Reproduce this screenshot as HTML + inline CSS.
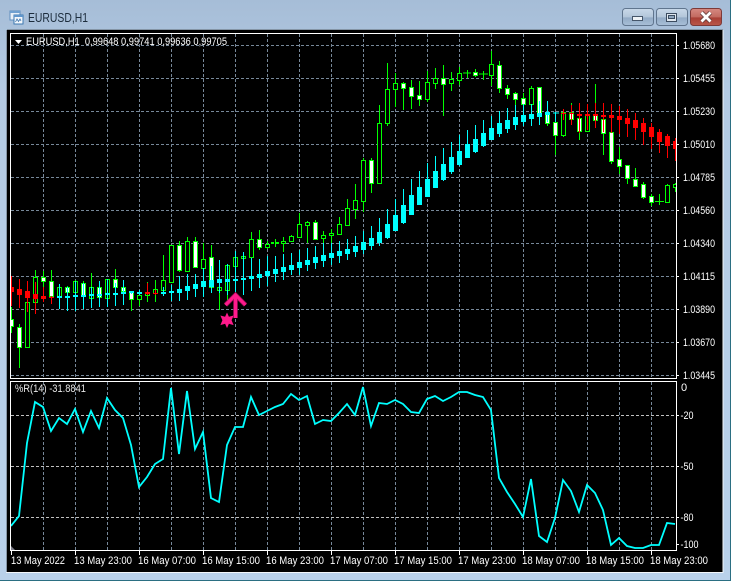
<!DOCTYPE html>
<html><head><meta charset="utf-8"><title>EURUSD,H1</title>
<style>
html,body{margin:0;padding:0;background:#fff;width:734px;height:582px;overflow:hidden}
svg{display:block}
text{font-family:"Liberation Sans",sans-serif;font-size:11px;fill:#fff}
</style></head><body>
<svg width="734" height="582" viewBox="0 0 734 582" xmlns="http://www.w3.org/2000/svg">
<defs>
<linearGradient id="bg" x1="0" y1="0" x2="0" y2="1"><stop offset="0" stop-color="#a6bdd7"/><stop offset=".16" stop-color="#b4cbe4"/><stop offset="1" stop-color="#b9d1ea"/></linearGradient>
<linearGradient id="btn" x1="0" y1="0" x2="0" y2="1"><stop offset="0" stop-color="#c9d8e9"/><stop offset=".5" stop-color="#b3c6da"/><stop offset=".55" stop-color="#93abc6"/><stop offset="1" stop-color="#a9c0d8"/></linearGradient>
<linearGradient id="cls" x1="0" y1="0" x2="0" y2="1"><stop offset="0" stop-color="#d68a82"/><stop offset=".5" stop-color="#c26a60"/><stop offset=".55" stop-color="#a93f35"/><stop offset="1" stop-color="#b9574a"/></linearGradient>
<clipPath id="m"><rect x="11" y="34" width="665" height="344"/></clipPath>
<clipPath id="i"><rect x="11" y="382" width="665" height="168"/></clipPath>
</defs>
<rect x="0" y="0" width="731" height="581" fill="url(#bg)"/>
<path d="M730.5 0V581M0 580.5H731" stroke="#2b6f82" fill="none"/>
<rect x="7" y="30" width="716" height="542" fill="#000"/>
<path d="M7 29.5H723M6.5 30V573" stroke="#8595a6" fill="none"/>
<path d="M6 572.5H723.5M723 30V573" stroke="#f2f6fa" fill="none"/>

<!-- title bar -->
<g shape-rendering="crispEdges">
<rect x="10" y="11" width="10" height="9" fill="#e8f0f8" stroke="#5f8fc0"/>
<rect x="10" y="11" width="10" height="2" fill="#6fa0d0"/>
<rect x="14" y="15" width="9" height="9" fill="#f4f8fc" stroke="#3d78b0"/>
<rect x="14" y="15" width="9" height="2" fill="#5f96cc"/>
</g>
<path d="M15.5 22l1.5-3 1.500 2.500 1.500-2.500 1 2" stroke="#3b74ad" fill="none" stroke-width=".8"/>
<text x="28" y="22" style="font-size:12.500px;fill:#1c2c3c" textLength="60" lengthAdjust="spacingAndGlyphs">EURUSD,H1</text>

<rect x="622.5" y="8.5" width="31" height="17" rx="3" fill="url(#btn)" stroke="#60758e"/>
<rect x="632.5" y="16.5" width="10" height="4" fill="#eef2f6" stroke="#46566a"/>
<rect x="656.5" y="8.5" width="31" height="17" rx="3" fill="url(#btn)" stroke="#60758e"/>
<rect x="666.5" y="13.5" width="10" height="8" fill="#dfe7ef" stroke="#3c4c60"/>
<rect x="668.5" y="15.5" width="6" height="3" fill="#8fa6be" stroke="#3c4c60"/>
<rect x="690.5" y="8.5" width="31" height="17" rx="3" fill="url(#cls)" stroke="#7d3a38"/>
<path d="M701.5 12.5l9 9M710.5 12.5l-9 9" stroke="#5d3a38" stroke-width="4.4"/>
<path d="M701.5 12.5l9 9M710.5 12.5l-9 9" stroke="#fff" stroke-width="2.8"/>

<!-- grids -->
<g fill="none" stroke="#778899" stroke-dasharray="3 2" shape-rendering="crispEdges">
<path d="M11 45.5H676M11 78.5H676M11 111.5H676M11 144.5H676M11 177.5H676M11 210.5H676M11 243.5H676M11 276.5H676M11 309.5H676M11 342.5H676M11 375.5H676"/>
<path d="M43.5 34V378M75.5 34V378M107.5 34V378M139.5 34V378M171.5 34V378M203.5 34V378M235.5 34V378M267.5 34V378M299.5 34V378M331.5 34V378M363.5 34V378M395.5 34V378M427.5 34V378M459.5 34V378M491.5 34V378M523.5 34V378M555.5 34V378M587.5 34V378M619.5 34V378M651.5 34V378"/>
<path d="M43.5 382V550M75.5 382V550M107.5 382V550M139.5 382V550M171.5 382V550M203.5 382V550M235.5 382V550M267.5 382V550M299.5 382V550M331.5 382V550M363.5 382V550M395.5 382V550M427.5 382V550M459.5 382V550M491.5 382V550M523.5 382V550M555.5 382V550M587.5 382V550M619.5 382V550M651.5 382V550"/>
</g>
<path d="M11 415.5H676M11 466.5H676M11 517.5H676" stroke="#c0c0c0" stroke-dasharray="3 2" fill="none" shape-rendering="crispEdges"/>

<!-- frames -->
<g stroke="#fff" fill="none" shape-rendering="crispEdges">
<path d="M10.5 33V379M10 33.5H677M676.5 33V379M10 378.5H677"/>
<path d="M10.5 381V551M10 381.5H677M676.5 381V551M10 550.5H677"/>
<path d="M677 45.5h2M677 78.5h2M677 111.5h2M677 144.5h2M677 177.5h2M677 210.5h2M677 243.5h2M677 276.5h2M677 309.5h2M677 342.5h2M677 375.5h2M677 415.5h2M677 466.5h2M677 517.5h2M677 544.5h2"/>
<path d="M11.5 551v4M75.5 551v4M139.5 551v4M203.5 551v4M267.5 551v4M331.5 551v4M395.5 551v4M459.5 551v4M523.5 551v4M587.5 551v4M651.5 551v4"/>
</g>

<!-- candles -->
<g clip-path="url(#m)" fill="none" shape-rendering="crispEdges">
<path stroke="#0f0" d="M11.5 307V333M19.5 324V368M27.5 302V347M35.5 270V303M43.5 271V287M51.5 270V298M59.5 284V298M67.5 286V293M75.5 280V292M83.5 281V297M91.5 273V298M99.5 281V298M107.5 279V298M115.5 269V287M123.5 286V292M131.5 291V311M139.5 292V306M147.5 282V302M155.5 280V302M163.5 255V292M171.5 245V282M179.5 241V272M187.5 237V272M195.5 237V268M203.5 243V268M211.5 245V288M219.5 260V310M227.5 264V300M235.5 251V285M243.5 252V268M251.5 232V258M259.5 230V250M267.5 241V249M275.5 239V247M283.5 237V252M291.5 235V242M299.5 213V238M307.5 221V243M315.5 220V240M323.5 231V243M331.5 229V243M339.5 217V235M347.5 199V226M355.5 184V219M363.5 158V212M371.5 158V193M379.5 105V183M387.5 63V126M395.5 73V107M403.5 82V110M411.5 80V109M419.5 81V106M427.5 71V102M435.5 68V89M443.5 65V116M451.5 72V91M459.5 67V85M467.5 70V78M475.5 69V77M483.5 71V80M491.5 51V86M499.5 61V93M507.5 85V99M515.5 92V112M523.5 93V115M531.5 86V113M539.5 87V118M547.5 110V126M555.5 113V155M563.5 109V137M571.5 103V125M579.5 103V140M587.5 115V131M595.5 84V128M603.5 119V155M611.5 132V164M619.5 147V174M627.5 165V184M635.5 168V187M643.5 182V199M651.5 194V206M659.5 194V205M667.5 184V202M675.5 183V192"/>
<path stroke="#0f0" d="M463 73h8M479 74h9M555 113h1M655 201.500h9" />
<path stroke="#0f0" fill="#fff" d="M9.500 319.500h4V326.500h-4zM17.500 327.500h4V347.500h-4zM41.500 277.500h4V281.500h-4zM49.500 281.500h4V296.500h-4zM65.500 287.500h4V292.500h-4zM81.500 283.500h4V296.500h-4zM97.500 287.500h4V297.500h-4zM113.500 279.500h4V287.500h-4zM121.500 287.500h4V291.500h-4zM129.500 292.500h4V299.500h-4zM177.500 245.500h4V270.500h-4zM193.500 241.500h4V267.500h-4zM209.500 257.500h4V287.500h-4zM257.500 239.500h4V247.500h-4zM313.500 222.500h4V239.500h-4zM369.500 160.500h4V183.500h-4zM401.500 83.500h4V88.500h-4zM409.500 87.500h4V96.500h-4zM417.500 95.500h4V99.500h-4zM441.500 78.500h4V84.500h-4zM473.500 72.500h4V75.500h-4zM497.500 65.500h4V88.500h-4zM505.500 88.500h4V94.500h-4zM513.500 93.500h4V99.500h-4zM521.500 98.500h4V104.500h-4zM537.500 87.500h4V115.500h-4zM545.500 112.500h4V123.500h-4zM553.500 122.500h4V135.500h-4zM569.500 112.500h4V119.500h-4zM577.500 118.500h4V131.500h-4zM593.500 114.500h4V120.500h-4zM601.500 119.500h4V133.500h-4zM609.500 132.500h4V161.500h-4zM617.500 159.500h4V166.500h-4zM625.500 165.500h4V178.500h-4zM633.500 179.500h4V186.500h-4zM641.500 184.500h4V197.500h-4zM649.500 196.500h4V202.500h-4z"/>
<path stroke="#0f0" fill="#000" d="M25.500 302.500h4V347.500h-4zM33.500 277.500h4V302.500h-4zM57.500 287.500h4V297.500h-4zM73.500 281.500h4V292.500h-4zM89.500 287.500h4V298.500h-4zM105.500 279.500h4V298.500h-4zM137.500 295.500h4V299.500h-4zM145.500 293.500h4V295.500h-4zM153.500 289.500h4V293.500h-4zM161.500 280.500h4V290.500h-4zM169.500 245.500h4V282.500h-4zM185.500 241.500h4V271.500h-4zM201.500 259.500h4V268.500h-4zM217.500 287.500h4V290.500h-4zM225.500 265.500h4V290.500h-4zM233.500 257.500h4V266.500h-4zM241.500 256.500h4V258.500h-4zM249.500 239.500h4V257.500h-4zM265.500 244.500h4V247.500h-4zM281.500 241.500h4V243.500h-4zM289.500 236.500h4V241.500h-4zM297.500 224.500h4V237.500h-4zM305.500 222.500h4V225.500h-4zM321.500 235.500h4V238.500h-4zM329.500 233.500h4V235.500h-4zM337.500 224.500h4V234.500h-4zM345.500 208.500h4V225.500h-4zM353.500 200.500h4V209.500h-4zM361.500 160.500h4V201.500h-4zM377.500 123.500h4V183.500h-4zM385.500 89.500h4V123.500h-4zM393.500 83.500h4V89.500h-4zM425.500 82.500h4V99.500h-4zM433.500 78.500h4V83.500h-4zM449.500 79.500h4V83.500h-4zM457.500 73.500h4V80.500h-4zM489.500 64.500h4V75.500h-4zM529.500 88.500h4V104.500h-4zM561.500 112.500h4V135.500h-4zM585.500 115.500h4V131.500h-4zM665.500 185.500h4V202.500h-4zM673.500 184.500h4V187.500h-4z"/>
<path stroke="#0f0" stroke-width="2" d="M274 243h-3M279 243h-3"/>

<!-- cyan series -->
<path stroke="#0ff" d="M59.500 284V309M67.500 287V311M75.500 281V311M83.500 283V309M91.500 287V308M99.500 281V307M107.500 279V307M115.500 283V306M123.500 280V305M131.500 291V294M139.500 290V295M163.500 287V296M171.500 285V301M179.500 276V301M187.500 274V300M195.500 274V297M203.500 268V297M211.500 266V293M219.500 260V293M227.500 264V295M235.500 251V295M243.500 252V295M251.500 258V291M259.500 259V288M267.500 256V286M275.500 256V282M283.500 254V280M291.500 253V275M299.500 250V275M307.500 248V271M315.500 246V269M323.500 243V267M331.500 243V265M339.500 241V263M347.500 239V260M355.500 236V257M363.500 231V254M371.500 226V250M379.500 218V246M387.500 209V239M395.500 199V231M403.500 189V224M411.500 179V215M419.500 171V205M427.500 163V197M435.500 156V188M443.500 148V181M451.500 142V174M459.500 135V166M467.500 130V158M475.500 125V153M483.500 120V147M491.500 116V140M499.500 111V137M507.500 108V133M515.500 105V130M523.500 104V126M531.500 104V126M539.500 101V125M547.500 101V122M555.500 112V122"/>
<path stroke="#0ff" stroke-width="5" d="M59.500 296V298M67.500 296V298M75.500 295V297M83.500 295V297M91.500 294V296M99.500 294V296M107.500 293V295M115.500 293V295M123.500 292V294M131.500 291V293M139.500 292V294M163.500 292V294M171.500 291V293M179.500 289V293M187.500 286V291M195.500 284V289M203.500 281V287M211.500 280V287M219.500 279V283M227.500 279V282M235.500 279V281M243.500 278V280M251.500 276V279M259.500 274V278M267.500 271V276M275.500 269V274M283.500 267V272M291.500 265V270M299.500 262V268M307.500 260V265M315.500 257V263M323.500 255V261M331.500 253V258M339.500 251V256M347.500 249V254M355.500 246V252M363.500 242V250M371.500 238V246M379.500 232V243M387.500 224V238M395.500 215V231M403.500 205V223M411.500 195V215M419.500 187V205M427.500 179V197M435.500 171V188M443.500 164V180M451.500 157V172M459.500 151V165M467.500 144V158M475.500 139V152M483.500 133V146M491.500 128V140M499.500 123V134M507.500 120V129M515.500 117V125M523.500 115V122M531.500 114V119M539.500 113V117M547.500 112V115"/>
<path stroke="#0ff" d="M553 113h6"/>

<!-- red series -->
<path stroke="#f00" d="M11.500 276V306M19.500 279V308M27.500 281V312M35.500 282V314M43.500 287V302M51.500 296V304M147.500 283V295M155.500 290V295M563.500 109V120M571.500 105V125M579.500 103V133M587.500 104V130M595.500 103V128M603.500 103V132M611.500 104V133M619.500 106V134M627.500 109V137M635.500 113V140M643.500 118V145M651.500 123V149M659.500 129V153M667.500 134V158M675.500 138V161"/>
<path stroke="#f00" stroke-width="5" d="M11.500 287V292M19.500 289V295M27.500 291V298M35.500 294V299M43.500 296V299M51.500 297V298M147.500 292V294M155.500 293V294M563.500 113V114M571.500 113V114M579.500 114V116M587.500 114V116M595.500 114V116M603.500 115V117M611.500 115V118M619.500 116V120M627.500 118V124M635.500 120V128M643.500 123V132M651.500 127V137M659.500 132V142M667.500 136V146M675.500 141V149"/>
</g>

<!-- arrow and star -->
<path d="M235.500 318V296M225.500 305l10-10 10 10" fill="none" stroke="#a80d5c" stroke-width="4.600"/>
<path d="M235.500 318V296M225.500 305l10-10 10 10" fill="none" stroke="#ff1a8c" stroke-width="3"/>
<path d="M227 312.500l1.900 4.300 4.700-1.300-2 4.800 2 4.800-4.700-1.300-1.900 4.300-1.900-4.300-4.700 1.300 2-4.800-2-4.800 4.700 1.300z" fill="#ff1a8c"/>

<!-- %R line -->
<g clip-path="url(#i)">
<path fill="#7f7f8a" d="M11 546l5 5h-5z"/>
<polyline fill="none" stroke="#0ff" stroke-width="1.800" points="11,526 19,516 27,443 35,402 43,407 51,431 59,418 67,424 75,409 83,432 91,411 99,428 107,398 115,410 123,418 131,445 139,487 147,477 155,464 163,459 171,388 179,454 187,391 195,449 203,432 211,498 219,502 227,445 235,427 243,427 251,397 259,415 267,411 275,407 283,404 291,394 299,400 307,396 315,424 323,420 331,421 339,413 347,404 355,415 363,387 371,426 379,403 387,404 395,400 403,404 411,412 419,413 427,399 435,396 443,401 451,397 459,392 467,392 475,395 483,397 491,410 499,478 507,492 515,504 523,517 531,479 539,536 547,542 555,518 563,480 571,491 579,512 587,485 595,493 603,510 611,545 619,538 627,546 635,548 643,548 651,545 659,545 667,523 675,524"/>
</g>

<!-- labels -->
<path d="M15 40h7l-3.500 4z" fill="#fff"/>
<text x="26" y="45" textLength="201" lengthAdjust="spacingAndGlyphs" xml:space="preserve">EURUSD,H1  0,99648 0,99741 0,99636 0,99705</text>
<text x="15" y="392" textLength="71" lengthAdjust="spacingAndGlyphs" style="fill:#e8e8e8">%R(14) -31.8841</text>

<text x="683" y="49" textLength="32" lengthAdjust="spacingAndGlyphs">1.05680</text>
<text x="683" y="82" textLength="32" lengthAdjust="spacingAndGlyphs">1.05455</text>
<text x="683" y="115" textLength="32" lengthAdjust="spacingAndGlyphs">1.05230</text>
<text x="683" y="148" textLength="32" lengthAdjust="spacingAndGlyphs">1.05010</text>
<text x="683" y="181" textLength="32" lengthAdjust="spacingAndGlyphs">1.04785</text>
<text x="683" y="214" textLength="32" lengthAdjust="spacingAndGlyphs">1.04560</text>
<text x="683" y="247" textLength="32" lengthAdjust="spacingAndGlyphs">1.04340</text>
<text x="683" y="280" textLength="32" lengthAdjust="spacingAndGlyphs">1.04115</text>
<text x="683" y="313" textLength="32" lengthAdjust="spacingAndGlyphs">1.03890</text>
<text x="683" y="346" textLength="32" lengthAdjust="spacingAndGlyphs">1.03670</text>
<text x="683" y="379" textLength="32" lengthAdjust="spacingAndGlyphs">1.03445</text>

<text x="681" y="391">0</text>
<text x="680.500" y="419" textLength="13" lengthAdjust="spacingAndGlyphs">-20</text>
<text x="680.500" y="470" textLength="13" lengthAdjust="spacingAndGlyphs">-50</text>
<text x="680.500" y="521" textLength="13" lengthAdjust="spacingAndGlyphs">-80</text>
<text x="680.500" y="548" textLength="18" lengthAdjust="spacingAndGlyphs">-100</text>

<text x="11" y="564" textLength="54" lengthAdjust="spacingAndGlyphs">13 May 2022</text>
<text x="74" y="564" textLength="58" lengthAdjust="spacingAndGlyphs">13 May 23:00</text>
<text x="138" y="564" textLength="58" lengthAdjust="spacingAndGlyphs">16 May 07:00</text>
<text x="202" y="564" textLength="58" lengthAdjust="spacingAndGlyphs">16 May 15:00</text>
<text x="266" y="564" textLength="58" lengthAdjust="spacingAndGlyphs">16 May 23:00</text>
<text x="330" y="564" textLength="58" lengthAdjust="spacingAndGlyphs">17 May 07:00</text>
<text x="394" y="564" textLength="58" lengthAdjust="spacingAndGlyphs">17 May 15:00</text>
<text x="458" y="564" textLength="58" lengthAdjust="spacingAndGlyphs">17 May 23:00</text>
<text x="522" y="564" textLength="58" lengthAdjust="spacingAndGlyphs">18 May 07:00</text>
<text x="586" y="564" textLength="58" lengthAdjust="spacingAndGlyphs">18 May 15:00</text>
<text x="650" y="564" textLength="58" lengthAdjust="spacingAndGlyphs">18 May 23:00</text>
</svg>
</body></html>
